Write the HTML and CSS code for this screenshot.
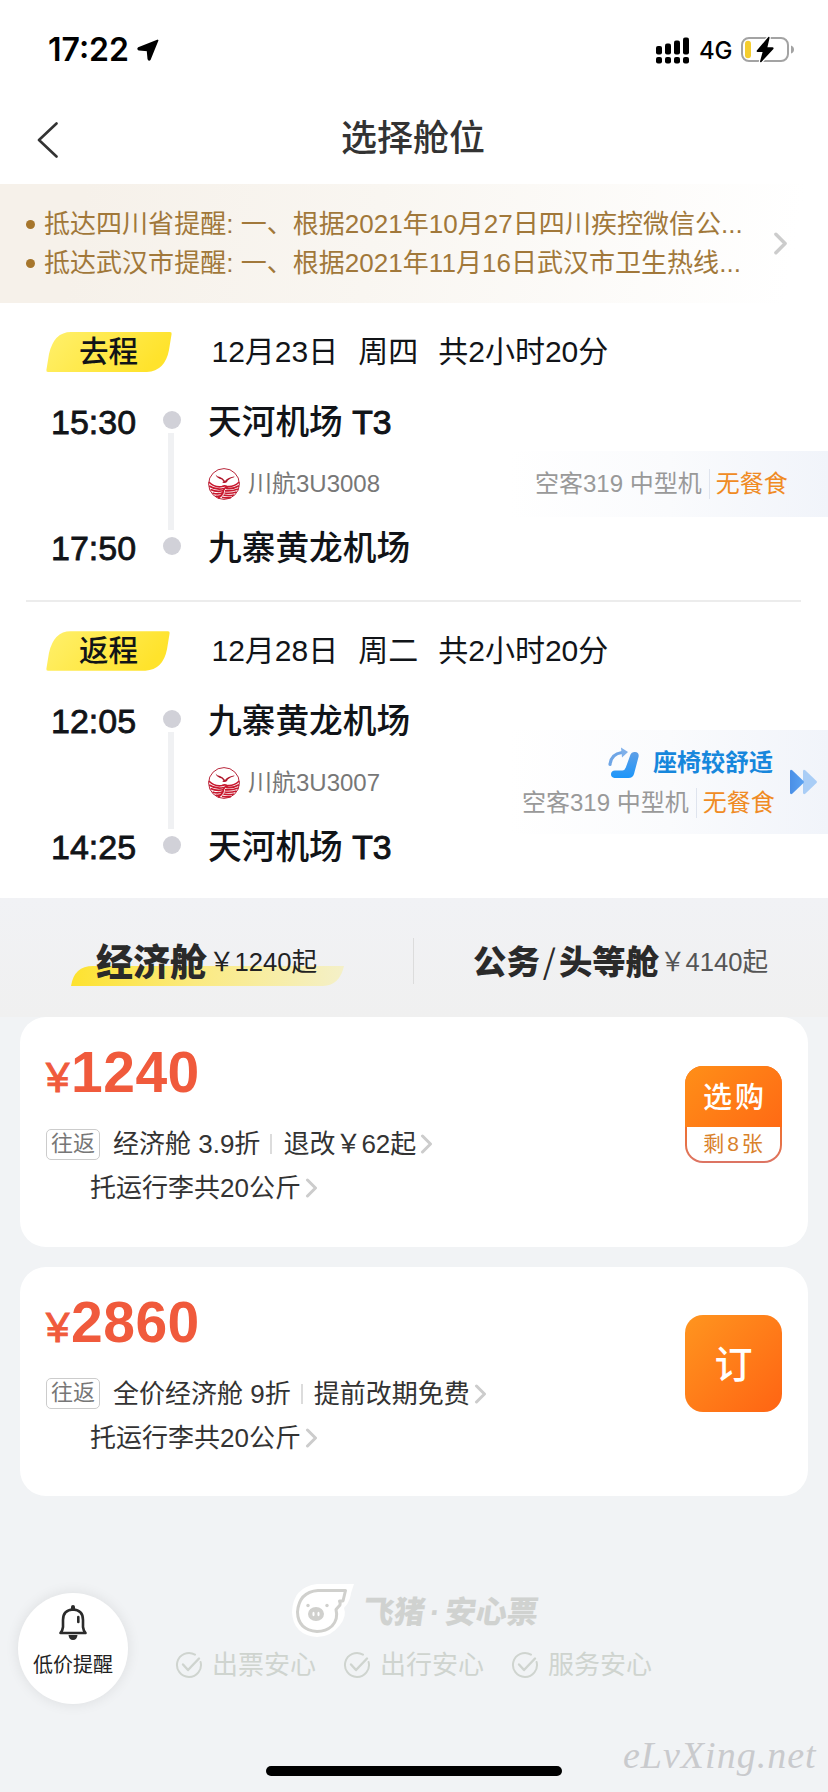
FILE: index.html
```html
<!DOCTYPE html>
<html lang="zh-CN">
<head>
<meta charset="utf-8">
<title>选择舱位</title>
<link rel="stylesheet" href="styles.css">
</head>
<body>
<svg class="defs" width="0" height="0">
  <defs>
    <linearGradient id="yellow" x1="0" y1="0" x2="1" y2="0.3"><stop offset="0" stop-color="#fff06c"/><stop offset="1" stop-color="#ffe32c"/></linearGradient>
    <linearGradient id="swoosh" x1="0" y1="0" x2="1" y2="0"><stop offset="0" stop-color="#fde22f"/><stop offset="0.45" stop-color="#fbea80"/><stop offset="1" stop-color="#f4f0c8"/></linearGradient>
    <linearGradient id="blue" x1="0" y1="0" x2="0" y2="1"><stop offset="0" stop-color="#5f9fe6"/><stop offset="1" stop-color="#1c96fa"/></linearGradient>
    <linearGradient id="arrow1" x1="0" y1="0" x2="1" y2="0"><stop offset="0" stop-color="#4a8fe6"/><stop offset="1" stop-color="#5aa2f2"/></linearGradient>
    <symbol id="chev" viewBox="0 0 12 20"><path d="M2 2 10 10 2 18" fill="none" stroke="#ccc" stroke-width="3" stroke-linecap="round" stroke-linejoin="round"/></symbol>
    <symbol id="check" viewBox="0 0 28 28"><path d="M20 3.600A12 12 0 1 0 25.600 11" fill="none" stroke="#cfd4cf" stroke-width="2" stroke-linecap="round"/><path d="M8 13.500 13 19 24 7.500" fill="none" stroke="#cfd4cf" stroke-width="2.400" stroke-linecap="round" stroke-linejoin="round"/></symbol>
    <symbol id="badge" viewBox="0 0 126 40"><path d="M25 0H124Q126 0 125.600 2L123 18Q119 39 101 40H2Q0 40 .4 38L3 22Q8 0 25 0Z" fill="url(#yellow)"/></symbol>
    <symbol id="airline" viewBox="0 0 32 32">
      <circle cx="16" cy="16" r="15.400" fill="#fff" stroke="#b8283c" stroke-width="1"/>
      <path d="M7.500 6.500Q9 8.500 12 9Q15 10 17 13Q19 9.500 26 8.500Q27.500 8.500 25.500 9.500Q20 11 19 14Q17 15.800 14.500 14.500Q14 14 15.500 13.500Q14 11 11.500 10.800Q8.500 10 7.500 6.500Z" fill="#b0182c"/>
      <g fill="none" stroke="#c8182e" stroke-width="1.700">
        <path d="M.8 14Q7 20 14 18.500Q18 17 20 19.500"/><path d="M31.200 14Q26 19 20 18.500Q16 19.500 15 24Q14 28 10 30"/>
        <path d="M1.200 18Q8 22.500 16 20.500"/><path d="M2.500 21.500Q9 24.500 16 22.500"/><path d="M4.500 25Q10 27 15.500 24.500"/><path d="M7.500 28.200Q11 29 14 27"/>
        <path d="M31 17.800Q25 21.500 18 20.500"/><path d="M30 21Q24 23.500 17 22.800"/><path d="M28.500 24Q23 25.800 16.500 25"/><path d="M26 27Q21 28.200 15.500 27.200"/><path d="M23 29.500Q18 30.500 14 29.300"/>
      </g>
    </symbol>
  </defs>
</svg>

<div class="screen">
  <header class="status">
    <span class="clock">17:22</span>
    <svg class="loc" width="22" height="22" viewBox="0 0 22 22"><path d="M20.500 1.500 1.500 9.200Q.8 10.200 2 10.600L10.600 11.400 11.400 20Q12 21.400 12.800 20.500Z" fill="#000" stroke="#000" stroke-width="1.800" stroke-linejoin="round"/></svg>
    <svg class="signal" width="33" height="27" viewBox="0 0 33 27">
      <g><rect x="0" y="9" width="6" height="8.500" rx="2"/><rect x="9" y="6.500" width="6" height="11" rx="2"/><rect x="18" y="3.500" width="6" height="14" rx="2"/><rect x="27" y="0.500" width="6" height="17" rx="2"/>
      <rect x="0" y="20" width="6" height="6.500" rx="2"/><rect x="9" y="20" width="6" height="6.500" rx="2"/><rect x="18" y="20" width="6" height="6.500" rx="2"/><rect x="27" y="20" width="6" height="6.500" rx="2"/></g>
    </svg>
    <span class="net">4G</span>
    <svg class="battery" width="54" height="28" viewBox="0 0 54 28">
      <rect x="1" y="2" width="46" height="23" rx="7" fill="#fff" stroke="#a3a3a3" stroke-width="2"/>
      <rect x="4" y="4.800" width="6" height="17.400" rx="3" fill="#f5cd2e"/>
      <path d="M50 9.500Q53 10.500 53 13.500T50 17.500Z" fill="#a3a3a3"/>
      <path d="M27.300 1 15.800 14.500Q15.200 16 16.600 16H21.600L19 25.500Q19.200 26.800 20.400 26L32.400 13Q33 11.300 31.500 11.300H26.400L28.600 1.800Q28.500.3 27.300 1Z" fill="#000" stroke="#fff" stroke-width="2.400" paint-order="stroke"/>
    </svg>
  </header>

  <nav class="nav">
    <svg class="back" width="22" height="36" viewBox="0 0 22 36"><path d="M19.500 1.500 2 18 19.500 34.500" fill="none" stroke="#333" stroke-width="2.600" stroke-linecap="round" stroke-linejoin="round"/></svg>
    <h1 class="title">选择舱位</h1>
  </nav>

  <section class="notice">
    <ul class="notice-list">
      <li>抵达四川省提醒: 一、根据2021年10月27日四川疾控微信公...</li>
      <li>抵达武汉市提醒: 一、根据2021年11月16日武汉市卫生热线...</li>
    </ul>
    <svg class="notice-chev" width="15" height="23"><use href="#chev"/></svg>
  </section>

  <section class="leg">
    <div class="leg-head">
      <div class="badge"><svg width="126" height="40"><use href="#badge"/></svg><span>去程</span></div>
      <span class="date">12月23日</span><span class="date">周四</span><span class="date">共2小时20分</span>
    </div>
    <div class="route">
      <div class="times"><span>15:30</span><span>17:50</span></div>
      <div class="rail"><i class="dot"></i><i class="bar"></i><i class="dot"></i></div>
      <div class="stops">
        <span class="station">天河机场 <i>T3</i></span>
        <span class="flight"><svg width="32" height="32"><use href="#airline"/></svg>川航3U3008</span>
        <span class="station">九寨黄龙机场</span>
      </div>
      <div class="info single">
        <div class="plane"><span>空客319 中型机</span><span class="meal">无餐食</span></div>
      </div>
    </div>
  </section>

  <section class="leg return">
    <div class="leg-head">
      <div class="badge"><svg width="124" height="40"><use href="#badge"/></svg><span>返程</span></div>
      <span class="date">12月28日</span><span class="date">周二</span><span class="date">共2小时20分</span>
    </div>
    <div class="route">
      <div class="times"><span>12:05</span><span>14:25</span></div>
      <div class="rail"><i class="dot"></i><i class="bar"></i><i class="dot"></i></div>
      <div class="stops">
        <span class="station">九寨黄龙机场</span>
        <span class="flight"><svg width="32" height="32"><use href="#airline"/></svg>川航3U3007</span>
        <span class="station">天河机场 <i>T3</i></span>
      </div>
      <div class="info double">
        <div class="info-lines">
          <div class="seat">
            <svg width="32" height="32" viewBox="0 0 32 32"><path d="M2 17.500Q3 7 14 5.500" fill="none" stroke="#6fa6e6" stroke-width="3.200" stroke-linecap="round"/><path d="M13 .5 20 5 14 10.500Z" fill="#7fb0ea"/><path d="M22.500 7.500Q23.500 4.500 27 5Q31.500 5.500 30.500 10L26 27Q24.800 31 20.500 31H6.500Q2.800 30.500 3 27Q3.300 23.500 7 23.500H14.500Q17 23 17.800 20.500Z" fill="url(#blue)"/></svg>
            <span>座椅较舒适</span>
          </div>
          <div class="plane"><span>空客319 中型机</span><span class="meal">无餐食</span></div>
        </div>
        <svg class="more" width="29" height="26" viewBox="0 0 29 26"><path d="M14 2Q14.500 0 16.500 1.500L27.500 12Q28.500 13 27.500 14L16.500 24.500Q14.500 26 14 24Z" fill="#a9cdf6"/><path d="M1 2Q1.500 0 3.500 1.500L14.500 12Q15.500 13 14.500 14L3.500 24.500Q1.500 26 1 24Z" fill="url(#arrow1)"/></svg>
      </div>
    </div>
  </section>

  <section class="tabs">
    <div class="tab active">
      <svg class="swoosh" width="273" height="20" viewBox="0 0 273 20"><path d="M0 20Q3 0 22 0H273Q269 19 252 20Z" fill="url(#swoosh)"/></svg>
      <b>经济舱</b><span>￥1240起</span>
    </div>
    <div class="tab">
      <b>公务<i>/</i>头等舱</b><span>￥4140起</span>
    </div>
  </section>

  <main class="cards">
    <article class="card">
      <div class="fare">
        <div class="price"><small>¥</small>1240</div>
        <div class="row"><span class="tag">往返</span><span class="txt">经济舱 3.9折</span><i class="sep"></i><span class="txt">退改￥62起</span><svg width="13" height="20"><use href="#chev"/></svg></div>
        <div class="row bag"><span class="txt">托运行李共20公斤</span><svg width="13" height="20"><use href="#chev"/></svg></div>
      </div>
      <button class="buy split"><span>选购</span><em>剩8张</em></button>
    </article>
    <article class="card">
      <div class="fare">
        <div class="price"><small>¥</small>2860</div>
        <div class="row"><span class="tag">往返</span><span class="txt">全价经济舱 9折</span><i class="sep"></i><span class="txt">提前改期免费</span><svg width="13" height="20"><use href="#chev"/></svg></div>
        <div class="row bag"><span class="txt">托运行李共20公斤</span><svg width="13" height="20"><use href="#chev"/></svg></div>
      </div>
      <button class="buy">订</button>
    </article>
  </main>

  <footer class="promise">
    <div class="brand">
      <svg width="64" height="54" viewBox="0 0 64 54">
        <path d="M26 0H63Q60 8 59 14Q57 20 53 24Q56 32 49 41Q40 53 26 53Q2 51 1 28Q2 3 26 0Z" fill="#fff"/>
        <path d="M27 6.500H54.500L52 17H48.500Q49.500 19 49 21L45 25.500Q47.500 35 41 42Q35 47.500 26 47.500Q7 46 6.500 28Q8 8 27 6.500Z" fill="#fff" stroke="#d0d0cd" stroke-width="3" stroke-linejoin="round"/>
        <ellipse cx="25" cy="30" rx="8" ry="7" fill="#d0d0cd"/><ellipse cx="22.500" cy="30" rx="1.100" ry="2.200" fill="#fff"/><ellipse cx="27.500" cy="30" rx="1.100" ry="2.200" fill="#fff"/>
        <circle cx="17" cy="21.500" r="1.700" fill="#d0d0cd"/><circle cx="36" cy="21.500" r="1.700" fill="#d0d0cd"/>
      </svg>
      <span class="brand-name">飞猪<i>·</i>安心票</span>
    </div>
    <div class="checks">
      <span><svg width="28" height="28"><use href="#check"/></svg>出票安心</span>
      <span><svg width="28" height="28"><use href="#check"/></svg>出行安心</span>
      <span><svg width="28" height="28"><use href="#check"/></svg>服务安心</span>
    </div>
  </footer>

  <div class="alert">
    <svg width="30" height="37" viewBox="0 0 30 37"><path d="M15 5.500Q25 6 25 16V23Q25.500 27 27.500 29H2.500Q4.500 27 5 23V16Q5 6 15 5.500Z" fill="none" stroke="#2b2b2b" stroke-width="2.600" stroke-linejoin="round"/><path d="M13 5V3Q13 1 15 1T17 3V5ZM10.500 31H19.500Q19 36 15 36T10.500 31Z" fill="#2b2b2b"/><path d="M20.300 13V18" stroke="#2b2b2b" stroke-width="2.600" stroke-linecap="round"/></svg>
    <span>低价提醒</span>
  </div>
  <div class="home"></div>
  <div class="mark">eLvXing.net</div>
</div>
</body>
</html>
```
FILE: styles.css
```css
* { box-sizing: border-box; margin: 0; padding: 0; }
body { font-family: "Liberation Sans", "Noto Sans CJK SC", sans-serif; background: #f1f3f5; color: #111418; }
svg { display: block; flex: none; }
i, em { font-style: normal; }
.defs { position: absolute; }
.screen { position: relative; width: 828px; height: 1792px; overflow: hidden; background: #f1f3f5; white-space: nowrap; }

.status { height: 100px; background: #fff; display: flex; align-items: center; padding: 0 33px 0 48px; font-family: Inter, sans-serif; color: #000; }
.clock { font-size: 32px; font-weight: 600; line-height: 40px; width: 82px; }
.loc { margin-left: 7px; }
.signal { margin-left: auto; }
.net { font-size: 24px; font-weight: 500; line-height: 30px; margin: 1px 9px 0 10px; width: 33px; letter-spacing: -.3px; }

.nav { height: 84px; background: #fff; display: grid; grid-template-columns: 100px 1fr 102px; align-items: center; }
.nav .back { margin: -5px 0 0 37px; }
.title { font-size: 36px; font-weight: 500; line-height: 44px; text-align: center; color: #333; margin-top: -7px; }

.notice { height: 119px; background: linear-gradient(100deg, #f6f1ea 10%, #f9f6f1 45%, #fff 95%); display: flex; align-items: center; padding-left: 26px; }
.notice-list { list-style: none; width: 747px; font-size: 26px; line-height: 39px; color: #a1783a; letter-spacing: .03px; }
.notice-list li { display: flex; align-items: center; gap: 9px; }
.notice-list li::before { content: ""; width: 9px; height: 9px; border-radius: 50%; background: #a6762c; }

.leg { height: 298px; background: #fff; padding-top: 29px; position: relative; }
.return { height: 297px; padding-top: 30px; }
.return::before { content: ""; position: absolute; top: 2px; left: 26px; width: 775px; height: 2px; margin-top: -3px; background: #ececec; }
.leg-head { display: flex; align-items: center; height: 40px; padding-left: 46px; gap: 20px; }
.badge { position: relative; width: 145.500px; height: 40px; }
.badge span { position: absolute; left: 33px; top: 0; font-size: 29.500px; font-weight: 500; line-height: 40px; }
.date { font-size: 30px; line-height: 40px; }
.route { display: flex; padding-left: 51px; height: 168px; margin-top: 29px; }
.times { width: 112px; display: flex; flex-direction: column; justify-content: space-between; font-size: 34px; line-height: 42px; -webkit-text-stroke: .8px #111418; }
.rail { width: 18px; display: flex; flex-direction: column; align-items: center; gap: 4px; padding-top: 10px; }
.dot { width: 18px; height: 18px; border-radius: 50%; background: #d1d1d8; flex: none; }
.bar { width: 6px; height: 97px; margin: 0 0 3px -2px; background: #f0f1f3; flex: none; }
.stops { margin-left: 27px; display: flex; flex-direction: column; }
.station { font-size: 33.700px; font-weight: 500; line-height: 42px; }
.station i { -webkit-text-stroke: 1px #111418; }
.flight { display: flex; align-items: center; gap: 8px; height: 84px; padding-bottom: 3px; font-size: 24px; line-height: 30px; color: #777; }
.info { margin-left: auto; display: flex; align-items: center; background: linear-gradient(90deg, #fff, #fafbfd 50%, #f1f4fa); }
.single { width: 318px; height: 66px; margin-top: 50px; padding-left: 25px; }
.double { width: 318px; height: 104px; margin-top: 30px; padding-left: 12px; }
.plane { display: flex; align-items: center; font-size: 24px; line-height: 30px; color: #999; }
.meal { color: #f08b24; border-left: 1px solid #dfe4ee; margin-left: 7px; padding-left: 6px; }
.info-lines { width: 251px; }
.seat { display: flex; align-items: center; justify-content: flex-end; gap: 13px; height: 34px; margin-bottom: 8px; font-size: 24px; font-weight: 700; line-height: 28px; color: #1787dc; }
.more { margin-left: 16px; }

.tabs { height: 119px; display: grid; grid-template-columns: 414px 414px; background: linear-gradient(#f1f2f5, #f0f0f0); }
.tab { position: relative; display: flex; align-items: center; height: 46px; margin-top: 40px; color: #555; padding-left: 59px; }
.tab.active { color: #222; border-right: 1px solid #dcdcdc; padding-left: 96px; }
.tab b { position: relative; font-size: 33.400px; font-weight: 900; line-height: 46px; color: #2a2a2a; font-family: "Noto Sans CJK SC", sans-serif; width: 187px; margin-top: -3px; }
.tab.active b { font-size: 37px; width: 113px; }
.tab b i { font-weight: 400; padding: 0 3px; }
.tab span { position: relative; font-size: 25.600px; line-height: 30px; margin-top: 1px; }
.swoosh { position: absolute; left: 71px; top: 28px; }

.cards { display: flex; flex-direction: column; gap: 20px; padding: 0 20px; }
.card { height: 229.500px; background: #fff; border-radius: 26px; display: flex; justify-content: space-between; padding: 0 26px; }
.price { font-size: 57px; font-weight: 700; line-height: 60px; margin-top: 25px; color: #f05a3c; display: flex; align-items: baseline; letter-spacing: .5px; }
.price small { font-size: 42px; font-weight: 400; -webkit-text-stroke: 1px #f05a3c; width: 25px; }
.row { display: flex; align-items: center; height: 44px; font-size: 26px; line-height: 44px; color: #333; }
.price + .row { margin-top: 14px; }
.row svg { margin-left: 4px; }
.tag { width: 54px; height: 31px; border: 1.500px solid #ccc; border-radius: 5px; font-size: 22px; line-height: 28px; text-align: center; color: #777; margin-right: 13px; }
.sep { width: 2px; height: 20px; background: #dcdcdc; margin: 0 11px 0 10px; }
.bag { padding-left: 44px; }
.buy { width: 97px; height: 97px; margin-top: 48px; border: 0; border-radius: 18px; background: linear-gradient(135deg, #ff951f, #ff6413); color: #fff; font: 500 38px/101px "Liberation Sans", "Noto Sans CJK SC", sans-serif; text-align: center; }
.split { margin-top: 49px; display: flex; flex-direction: column; overflow: hidden; background: linear-gradient(#f0702c 60%, #dc7464); }
.split span { font-size: 29px; line-height: 65px; height: 61px; letter-spacing: 3px; padding-left: 3px; background: linear-gradient(135deg, #ff8f18, #ff6a14); }
.split em { height: 34px; margin: 0 2px; background: #fff; border-radius: 0 0 16px 16px; color: #d9822b; font-size: 21px; font-weight: 400; line-height: 34px; letter-spacing: 3px; padding-left: 2px; }

.promise { margin-top: 88px; padding-left: 175px; }
.brand { display: flex; align-items: center; height: 54px; padding-left: 116px; gap: 8px; }
.brand-name { font: 900 31px/40px "Noto Sans CJK SC", sans-serif; color: #d0d2d0; transform: skewX(-8deg); }
.brand-name i { padding: 0 5px; font-family: "Liberation Sans", sans-serif; }
.checks { display: flex; gap: 27px; margin-top: 12px; color: #cfd4cf; font-size: 26px; line-height: 30px; }
.checks span { display: flex; align-items: center; gap: 9px; }

.alert { position: absolute; left: 18px; top: 1593px; width: 110px; height: 111px; border-radius: 50%; background: #fff; box-shadow: 0 0 14px rgba(0,0,0,.09); display: flex; flex-direction: column; align-items: center; padding-top: 11px; font-size: 20px; line-height: 24px; color: #222; gap: 12px; }
.home { position: absolute; left: 266px; top: 1766px; width: 296px; height: 10px; border-radius: 5px; background: #000; }
.mark { position: absolute; left: 623px; top: 1732px; font: italic 38px/46px "Liberation Serif", serif; letter-spacing: 1px; color: #c9cacd; }
```
